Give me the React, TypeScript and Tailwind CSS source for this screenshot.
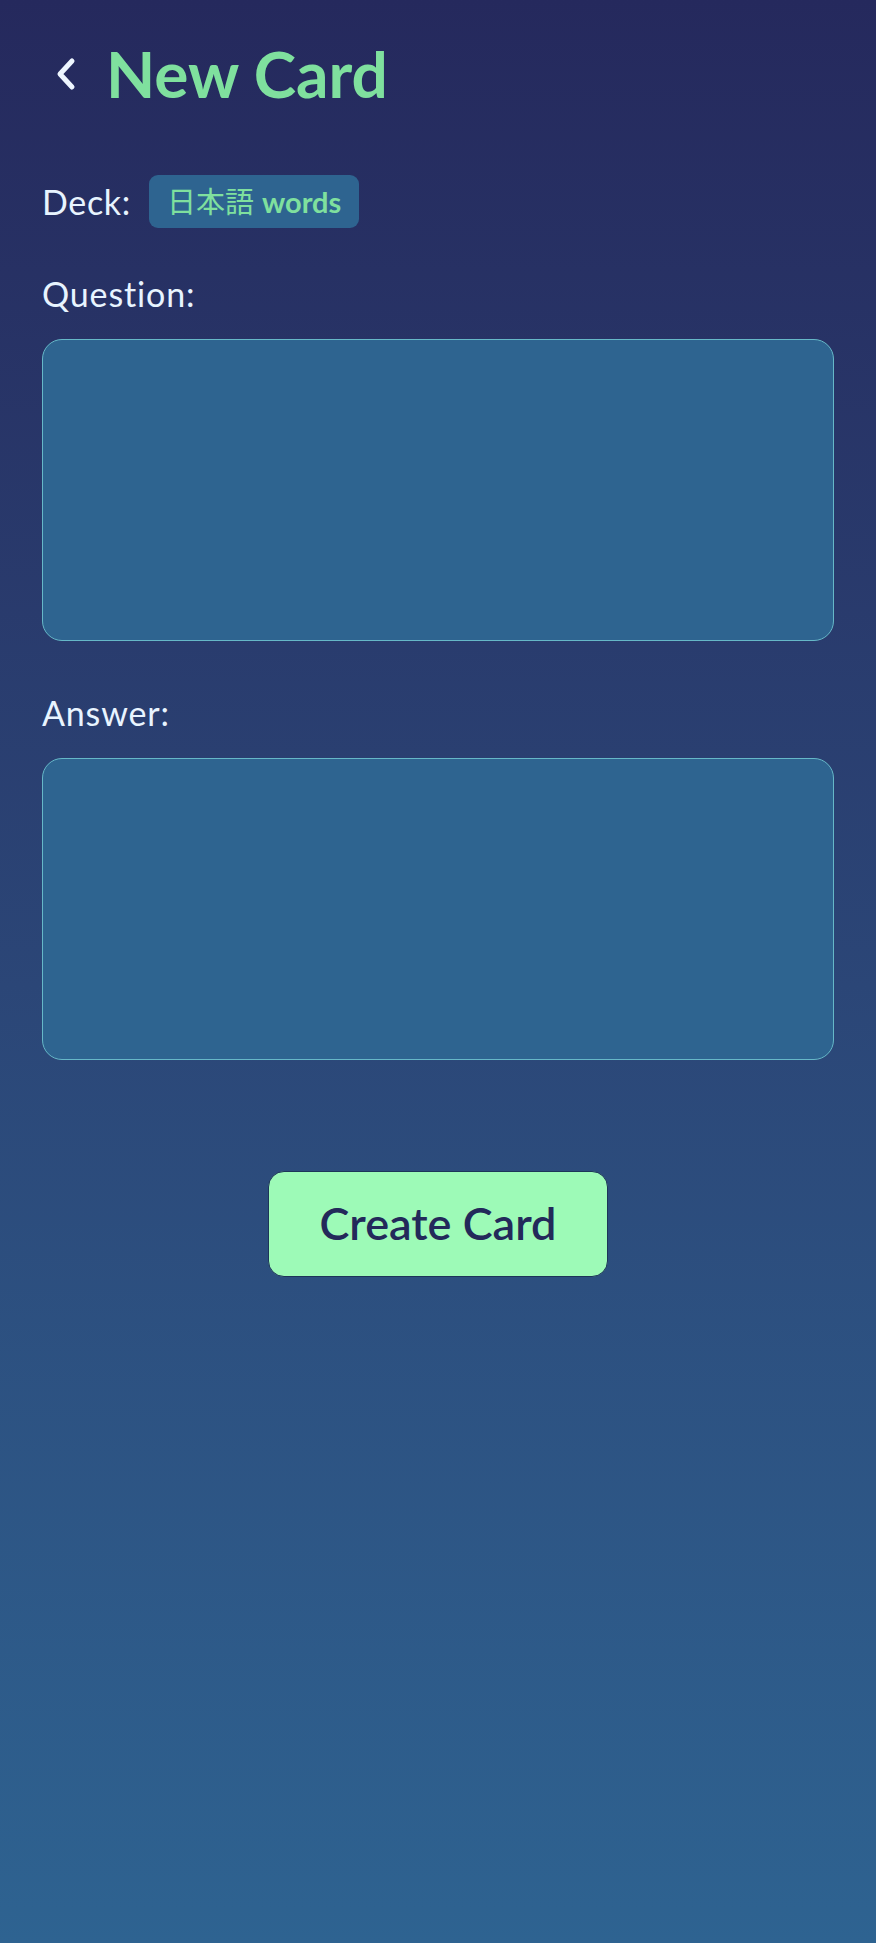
import { useState } from 'react'

// ── new card form ────────────────────────────────────────────────

const FONT = "font-['Lato','Noto_Sans_CJK_JP',sans-serif]"

function BackChevron() {
  return (
    <svg width="24" height="36" viewBox="0 0 24 36" fill="none">
      <path d="M18 5 L6 18 L18 31" stroke="#eef6ff" strokeWidth="5" strokeLinecap="round" strokeLinejoin="round" />
    </svg>
  )
}

function Field({ label, value, onChange }: { label: string; value: string; onChange: (v: string) => void }) {
  return (
    <div className="flex flex-col">
      <label className="text-[34px] leading-none tracking-[0.025em] text-[#e8f4ff]">{label}</label>
      <textarea
        value={value}
        onChange={(e) => onChange(e.target.value)}
        className="mt-[28px] h-[302px] w-full resize-none rounded-[20px] border border-[#66b8c8] bg-[#2e6490] p-4 text-[26px] text-white outline-none"
      />
    </div>
  )
}

export default function App() {
  const [question, setQuestion] = useState('')
  const [answer, setAnswer] = useState('')

  return (
    <div className={`min-h-screen bg-gradient-to-b from-[#25295d] to-[#2e6391] px-[42px] ${FONT}`}>
      {/* ── header ── */}
      <div className="flex items-center gap-[28px] pt-[42px] pl-[12px]">
        <button className="flex items-center">
          <BackChevron />
        </button>
        <h1 className="text-[64px] font-bold leading-none text-[#7fe09e]">New Card</h1>
      </div>

      {/* ── deck ── */}
      <div className="mt-[69px] flex items-center gap-[18px]">
        <span className="text-[34px] leading-none tracking-[0.02em] text-[#e8f4ff]">Deck:</span>
        <span className="flex h-[53px] items-center rounded-[9px] bg-[#2e6490] px-[18px] text-[29px] text-[#7fe09e]">
          <span className="font-normal">日本語</span>
          <span className="ml-[8px] font-bold">words</span>
        </span>
      </div>

      {/* ── fields ── */}
      <div className="mt-[49px] flex flex-col gap-[55px]">
        <Field label="Question:" value={question} onChange={setQuestion} />
        <Field label="Answer:" value={answer} onChange={setAnswer} />
      </div>

      <div className="mt-[111px] flex justify-center">
        <button className="h-[106px] w-[340px] rounded-[16px] border border-[#1d3558] bg-[#9dfab7] text-[45px] font-semibold text-[#23295a]">
          Create Card
        </button>
      </div>
    </div>
  )
}
